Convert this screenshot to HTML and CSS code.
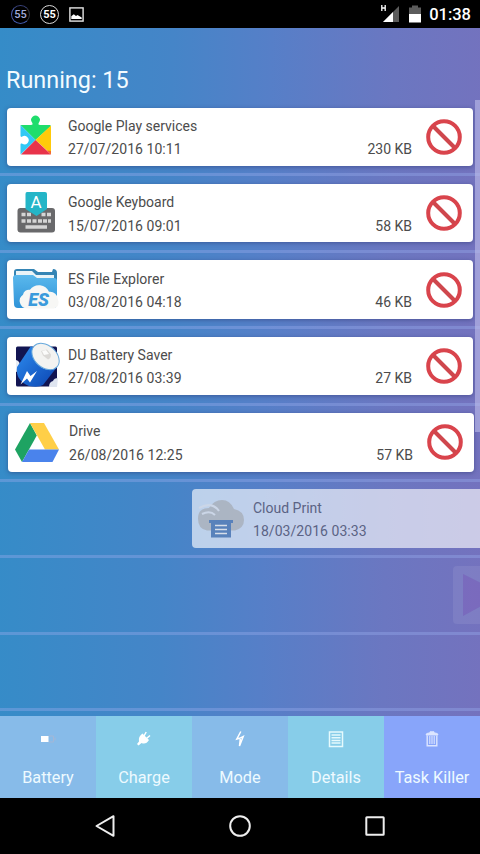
FILE: index.html
```html
<!DOCTYPE html>
<html lang="en">
<head>
    <meta charset="UTF-8">
    <meta name="viewport" content="width=device-width, initial-scale=1.0">
    <title>Task Killer</title>
    <link rel="stylesheet" href="styles.css">
</head>
<body>
    <!-- shared icon -->
    <svg class="defs" width="0" height="0">
        <symbol id="ban" viewBox="0 0 36 36">
            <circle cx="18" cy="18" r="15.8" fill="none" stroke="#d9444c" stroke-width="4"/>
            <path d="M7.5 7.5l21 21" stroke="#cf474d" stroke-width="4"/>
        </symbol>
    </svg>

    <div class="status">
        <span class="ring ring-blue">55</span>
        <span class="ring">55</span>
        <svg class="photo" width="15" height="15" viewBox="0 0 15 15">
            <rect x=".9" y=".9" width="13.2" height="13.2" fill="none" stroke="#e4e4e4" stroke-width="1.4"/>
            <path d="M2.3 12V9.300l2.500-2 2.200 1.700 1.500-1 4.200 2.500V12z" fill="#fff"/>
        </svg>
        <svg class="signal" width="20" height="18" viewBox="0 0 20 18">
            <path d="M19 1v16H3z" fill="#5c5c5c"/>
            <path d="M13 7v10H3z" fill="#fff"/>
            <path d="M1.800 0v6M5.200 0v6M1.800 3h3.400" stroke="#fff" stroke-width="1.300" fill="none"/>
        </svg>
        <svg class="power" width="12" height="18" viewBox="0 0 12 18">
            <path d="M0 2.500h3V.5h6v2h3V9H0z" fill="#5c5c5c"/>
            <path d="M0 9h12v8.500H0z" fill="#fff"/>
        </svg>
        <span class="clock">01:38</span>
    </div>

    <div class="app">
        <h1 class="title">Running: 15</h1>
        <div class="list">
            <div class="row">
                <div class="card">
                    <svg class="icon" width="48" height="48" viewBox="0 0 48 48">
                        <path d="M8.500 13H19c1.500 0 2-1 1.200-2.300a4.300 4.300 0 1 1 6.600 0C26 12 26.500 13 28 13h10l1 1-15.500 14z" fill="#1fdd6c"/>
                        <path d="M8.500 13L23.500 28 8.500 42.500V33c0-1.500.8-1.700 1.800-1.200a4.200 4.200 0 1 0 0-7.200c-1 .6-1.800.2-1.800-1z" fill="#30c8f5"/>
                        <path d="M39 13.500V42L23.500 28z" fill="#ffca0a"/>
                        <path d="M23.500 28L39 42.500H9z" fill="#e8334a"/>
                        <path d="M35 38.500l4 4V39z" fill="#f46a2a"/>
                    </svg>
                    <div class="info">
                        <p>Google Play services</p>
                        <p class="date">27/07/2016 10:11</p>
                    </div>
                    <span class="size">230 KB</span>
                    <svg class="ban" width="36" height="36"><use href="#ban"/></svg>
                </div>
            </div>
            <div class="row">
                <div class="card">
                    <svg class="icon" width="48" height="48" viewBox="0 4 48 48">
                        <rect x="5.500" y="24" width="37.500" height="24.500" rx="3" fill="#69696b"/>
                        <path d="M9.500 30.500h4M15 30.500h4M29.500 30.500h4M35 30.500h4M9.500 37h4M15 37h4M20.500 37h4M26 37h4M31 37h4M36 37h3" stroke="#d5d5d5" stroke-width="3.500"/>
                        <path d="M13.500 43h21.500" stroke="#d5d5d5" stroke-width="3.500"/>
                        <path d="M15 8h18q2 0 2 2v15l-10.500 7L13.500 25V10q0-2 1.500-2z" fill="#24b5c7"/>
                        <text x="24" y="24" text-anchor="middle" class="key">A</text>
                    </svg>
                    <div class="info">
                        <p>Google Keyboard</p>
                        <p class="date">15/07/2016 09:01</p>
                    </div>
                    <span class="size">58 KB</span>
                    <svg class="ban" width="36" height="36"><use href="#ban"/></svg>
                </div>
            </div>
            <div class="row">
                <div class="card">
                    <svg class="icon" width="48" height="48" viewBox="0 0 48 48">
                        <defs>
                            <linearGradient id="folder" x2="0" y2="1">
                                <stop offset="0" stop-color="#5ab8ec"/>
                                <stop offset="1" stop-color="#2f93d8"/>
                            </linearGradient>
                        </defs>
                        <path d="M2 8q0-3 3-3h17l4 3h14l1-3q4 0 4 4v24H2z" fill="#3585b5"/>
                        <path d="M4 7h16l4 4h18v6H4z" fill="#e9f3f7"/>
                        <path d="M1 14q0-3 3-3h17l4 3h17q3 0 3 3v23q0 4-4 4H6q-4 0-4-4z" fill="url(#folder)"/>
                        <path d="M15 44.500a7.500 7.500 0 0 1-4-13.700 6 6 0 0 1 7-5 11 11 0 0 1 19 2 8 8 0 0 1 9 8 6 6 0 0 1-4 8.700z" fill="#f7f7f5"/>
                        <text x="26.500" y="42" text-anchor="middle" class="es">ES</text>
                    </svg>
                    <div class="info">
                        <p>ES File Explorer</p>
                        <p class="date">03/08/2016 04:18</p>
                    </div>
                    <span class="size">46 KB</span>
                    <svg class="ban" width="36" height="36"><use href="#ban"/></svg>
                </div>
            </div>
            <div class="row">
                <div class="card">
                    <svg class="icon" width="48" height="48" viewBox="0 0 48 48">
                        <defs>
                            <linearGradient id="cell" x1="0" y1="0" x2="1" y2="1">
                                <stop offset="0" stop-color="#2d8df0"/>
                                <stop offset="1" stop-color="#0b43b0"/>
                            </linearGradient>
                        </defs>
                        <rect x="4" y="5.500" width="41" height="40" rx="1.500" fill="#121552"/>
                        <path d="M4 19q4 1 4 6t-4 6z" fill="#e8edf5"/>
                        <path d="M45 46h-8q0-5 4-6 1-3 5-3z" fill="#dfe5f0"/>
                        <path d="M19 5L5 26q-2 13 12 19 9 2 14-1l14-18z" fill="url(#cell)"/>
                        <ellipse cx="33.500" cy="15.500" rx="15.500" ry="11" transform="rotate(42 33.500 15.500)" fill="#f3f3f1" stroke="#67a9dc" stroke-width="1"/>
                        <path d="M29 10l6-1.500 4 5q0 4-3 5l-5-4z" fill="#dbd9d6"/>
                        <path d="M30 10l4-1 3 4-5 1z" fill="#fbfbfa"/>
                        <path d="M15 30l-6.500 13.500 6.500-6 3 4 7-11.500-6.500 5z" fill="#fff"/>
                    </svg>
                    <div class="info">
                        <p>DU Battery Saver</p>
                        <p class="date">27/08/2016 03:39</p>
                    </div>
                    <span class="size">27 KB</span>
                    <svg class="ban" width="36" height="36"><use href="#ban"/></svg>
                </div>
            </div>
            <div class="row">
                <div class="card card-moving">
                    <svg class="icon" width="48" height="48" viewBox="0 0 48 48">
                        <path d="M17 6l6.800 12.500L9 45 2 32.500z" fill="#1ea362"/>
                        <path d="M17 6h14l15 26.500H32z" fill="#ffcf48"/>
                        <path d="M16 32.500h30L39.500 45H9z" fill="#4a83ec"/>
                    </svg>
                    <div class="info">
                        <p>Drive</p>
                        <p class="date">26/08/2016 12:25</p>
                    </div>
                    <span class="size">57 KB</span>
                    <svg class="ban" width="36" height="36"><use href="#ban"/></svg>
                </div>
            </div>
            <div class="row">
                <div class="card card-sliding">
                    <svg class="icon" width="48" height="48" viewBox="0 0 48 48">
                        <path d="M10 37.500Q1 36 1 25.500T12 15Q17 7 25 7t12 9q10 2 10 11 0 8-9 10.500z" fill="#a0a4aa"/>
                        <path d="M2 15q13-7 20 3M5 21q8-4 13 1" fill="none" stroke="#d5dae6" stroke-width="2"/>
                        <path d="M12 27h24v3h-2v14.500H14V30h-2z" fill="#164e9c"/>
                        <path d="M18 32.500h12M18 36.500h12M18 40.500h12" stroke="#e8e8e8" stroke-width="1.500"/>
                    </svg>
                    <div class="info">
                        <p>Cloud Print</p>
                        <p class="date">18/03/2016 03:33</p>
                    </div>
                </div>
            </div>
            <div class="row">
                <div class="card card-entering">
                    <svg class="icon" width="48" height="48" viewBox="0 0 48 48">
                        <path d="M5 4l20 10v21L5 46z" fill="#7240ae"/>
                    </svg>
                </div>
            </div>
            <div class="row"></div>
            <div class="scrollbar"></div>
        </div>

        <div class="tabs">
            <div class="tab">
                <svg width="24" height="24" viewBox="0 0 24 24">
                    <path d="M12.500 9h5v6h-5" fill="none" stroke="#a3b7d6" stroke-width="1"/>
                    <rect x="5" y="9" width="7.500" height="6" fill="#fff"/>
                    <path d="M19 10.500v3" stroke="#a3b7d6"/>
                </svg>
                <span>Battery</span>
            </div>
            <div class="tab tab-cyan">
                <svg width="24" height="24" viewBox="0 0 24 24">
                    <path d="M10.500 6.500l6.500 6.500q-3 5-7.500 3l-3 2.500L5 17l2-2.500Q6 9.500 10.500 6.500z" fill="#fff"/>
                    <path d="M12 9l2.200-4M14.500 11.500l3.500-3" stroke="#fff" stroke-width="1.500"/>
                </svg>
                <span>Charge</span>
            </div>
            <div class="tab">
                <svg width="24" height="24" viewBox="0 0 24 24">
                    <path d="M12.800 4.500L8.800 12l2.700-.7L15.200 9.500 11.500 19l.8-7" fill="none" stroke="#fff" stroke-width="1.500"/>
                </svg>
                <span>Mode</span>
            </div>
            <div class="tab tab-cyan">
                <svg width="24" height="24" viewBox="0 0 24 24">
                    <rect x="5.500" y="5" width="13" height="14.500" fill="none" stroke="#e5fafd" stroke-width="1.500"/>
                    <path d="M7.500 8h9M7.500 10.700h9M7.500 13.400h9M7.500 16.100h9" stroke="#e5fafd" stroke-width="1.500"/>
                </svg>
                <span>Details</span>
            </div>
            <div class="tab tab-active">
                <svg width="24" height="24" viewBox="0 0 24 24">
                    <path d="M6 8q0-2 3-2h6q3 0 3 2zM10 6V4.800h4V6" fill="#dce5ff" stroke="#dce5ff" stroke-width="1"/>
                    <path d="M7.200 8.500v10.300h9.600V8.500" fill="none" stroke="#dce5ff" stroke-width="1.400"/>
                    <path d="M9.800 9v8M12 9v8M14.200 9v8" stroke="#dce5ff" stroke-width="1.100"/>
                </svg>
                <span>Task Killer</span>
            </div>
        </div>
    </div>

    <div class="nav">
        <svg width="24" height="24" viewBox="0 0 24 24"><path d="M20.500 2.200v19.600L3.500 12z" fill="none" stroke="#eee" stroke-width="2" stroke-linejoin="round"/></svg>
        <svg width="24" height="24" viewBox="0 0 24 24"><circle cx="12" cy="12" r="9.800" fill="none" stroke="#eee" stroke-width="2"/></svg>
        <svg width="24" height="24" viewBox="0 0 24 24"><rect x="3.300" y="3.300" width="17.400" height="17.400" rx=".5" fill="none" stroke="#eee" stroke-width="2"/></svg>
    </div>
</body>
</html>
```
FILE: styles.css
```css
*{
    box-sizing: border-box;
    margin: 0;
    padding: 0;
}
body{
    width: 480px;
    height: 854px;
    display: flex;
    flex-direction: column;
    overflow: hidden;
    background-color: #000;
    font-family: Roboto, "Liberation Sans", sans-serif;
}
.defs{
    position: absolute;
}

/* status bar */
.status{
    height: 28px;
    display: flex;
    align-items: center;
    padding: 0 9px 0 11px;
    color: #fff;
}
.ring{
    width: 19px;
    height: 19px;
    margin-right: 10px;
    border: 1.5px solid #d8d8d8;
    border-radius: 50%;
    font-size: 11px;
    font-weight: 700;
    line-height: 17px;
    text-align: center;
}
.ring-blue{
    border-color: #39427a #33353f #4058a8 #4a5dae;
    color: #a5addb;
    font-weight: 500;
}
.signal{
    margin-left: auto;
}
.power{
    margin: 0 8px 0 9px;
}
.clock{
    font-size: 16.5px;
    font-weight: 500;
    line-height: 28px;
    padding-top: 2px;
}

/* main screen */
.app{
    height: 770px;
    display: flex;
    flex-direction: column;
    background: linear-gradient(91deg, #358cc8 0%, #4585c8 35%, #567fc8 55%, #6b77c1 80%, #7472be 100%);
}
.title{
    height: 72px;
    padding: 38px 0 0 6px;
    color: #f3fbff;
    font-size: 23.400px;
    font-weight: 400;
    line-height: 28px;
}
.list{
    position: relative;
    height: 616px;
    overflow: hidden;
}
.row{
    height: 76.4px;
    padding: 7.500px 7px 0;
    border-bottom: 3px solid rgba(150, 170, 235, .4);
}
.card{
    position: relative;
    height: 58.500px;
    display: flex;
    padding: 0 11px 0 5px;
    background-color: #fff;
    border-radius: 4px;
    box-shadow: 0 1px 4px rgba(40, 50, 110, .5);
    color: #4c4c4c;
    font-size: 14px;
}
.icon{
    flex: none;
    width: 48px;
    height: 48px;
    margin-top: 4px;
    overflow: visible;
}
.info{
    flex: 1;
    padding: 7.300px 0 0 8px;
    line-height: 23.500px;
    white-space: nowrap;
}
.date{
    letter-spacing: .05px;
}
.size{
    padding: 30.800px 14px 0 0;
    line-height: 23.500px;
}
.ban{
    margin-top: 11.300px;
}
.key{
    fill: #fff;
    font-size: 17px;
}
.es{
    fill: #3b9bdc;
    font-size: 18px;
    font-style: italic;
    font-weight: 900;
}
/* cards caught in the slide-in animation */
.card-moving{
    left: 1px;
}
.card-sliding{
    left: 185px;
    background-color: rgba(255, 255, 255, .63);
    box-shadow: none;
    color: #5b6384;
}
.card-sliding .icon{
    opacity: .6;
}
.card-entering{
    left: 446px;
    background-color: rgba(255, 255, 255, .08);
    box-shadow: none;
}
.card-entering .icon{
    opacity: .3;
}
.scrollbar{
    position: absolute;
    top: 0;
    right: 0;
    width: 5px;
    height: 332px;
    background-color: rgba(190, 190, 235, .6);
}

/* bottom tabs */
.tabs{
    height: 82px;
    display: flex;
}
.tab{
    flex: 1;
    display: flex;
    flex-direction: column;
    align-items: center;
    padding-top: 11px;
    background-color: #87bbe9;
    color: #eefaff;
    font-size: 16.300px;
    line-height: 20px;
    white-space: nowrap;
}
.tab span{
    margin-top: 17px;
}
.tab-cyan{
    background-color: #87cde9;
}
.tab-active{
    background-color: #88a5fa;
}

/* system buttons */
.nav{
    height: 56px;
    display: flex;
    align-items: center;
    justify-content: center;
    gap: 111px;
}
```
